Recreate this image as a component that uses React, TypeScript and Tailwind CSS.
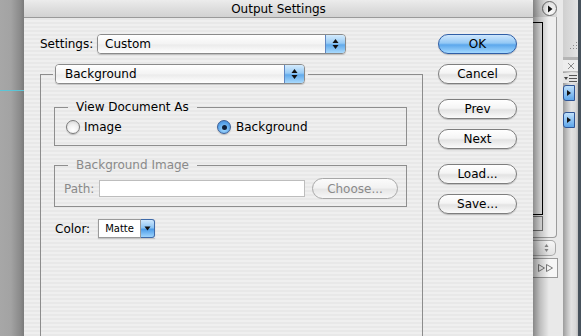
import React from "react";

function UpDown() {
  return (
    <svg width="7" height="12" viewBox="0 0 7 12">
      <path d="M3.5 1L6.5 5H0.5Z" fill="#111" />
      <path d="M3.5 11L6.5 7H0.5Z" fill="#111" />
    </svg>
  );
}

function Down() {
  return (
    <svg width="7" height="5" viewBox="0 0 7 5">
      <path d="M0.5 0.5H6.5L3.5 4.5Z" fill="#111" />
    </svg>
  );
}

function Popup({ label, width, pl }: { label: string; width: string; pl: string }) {
  return (
    <div className={`flex h-[20px] ${width} shrink-0 overflow-hidden rounded-[4px] border border-[#8a8a8a] shadow-[0_1px_1px_rgba(0,0,0,0.18)]`}>
      <div className={`flex flex-1 items-center bg-[linear-gradient(180deg,#ffffff_0%,#f3f3f3_50%,#ebebeb_55%,#ffffff_100%)] ${pl} text-[12px] text-black`}>
        {label}
      </div>
      <div className="flex w-[20px] items-center justify-center border-l border-[#5f86c0] bg-[linear-gradient(180deg,#d4ebfd_0%,#98cbf5_45%,#62aaeb_55%,#a9dafd_100%)]">
        <UpDown />
      </div>
    </div>
  );
}

function AquaButton({ children, primary }: { children: React.ReactNode; primary?: boolean }) {
  return (
    <div
      className={`flex h-[20px] w-[79px] items-center justify-center rounded-full border text-[12px] text-black shadow-[0_1px_1px_rgba(0,0,0,0.2)] ${
        primary
          ? "border-[#2f5ea6] bg-[linear-gradient(180deg,#cfe7fd_0%,#93c8f5_45%,#5ca7ec_55%,#a4d9ff_100%)]"
          : "border-[#7e7e7e] bg-[linear-gradient(180deg,#ffffff_0%,#f5f5f5_45%,#e3e3e3_55%,#fbfbfb_100%)]"
      }`}
    >
      {children}
    </div>
  );
}

function Radio({ checked }: { checked?: boolean }) {
  return checked ? (
    <div className="flex h-[14px] w-[14px] shrink-0 items-center justify-center rounded-full border border-[#3c5f96] bg-[radial-gradient(circle_at_50%_70%,#a9dcff_0%,#5aa4ea_60%,#3d7fcf_100%)] shadow-[0_1px_1px_rgba(0,0,0,0.2)]">
      <div className="h-[5px] w-[5px] rounded-full bg-[#10203a]" />
    </div>
  ) : (
    <div className="h-[14px] w-[14px] shrink-0 rounded-full border border-[#7a7a7a] bg-[radial-gradient(circle_at_50%_75%,#ffffff_0%,#f0f0f0_50%,#cfcfcf_100%)] shadow-[0_1px_1px_rgba(0,0,0,0.2)]" />
  );
}

export default function App() {
  return (
    <div className="flex h-[336px] w-[581px] overflow-hidden font-['DejaVu_Sans',sans-serif] text-[12px] text-black">
      {/* left backdrop */}
      <div className="flex w-[24px] shrink-0 flex-col bg-[linear-gradient(90deg,#a7a7a7_0%,#a3a3a3_45%,#8a8a8a_85%,#7a7a7a_100%)]">
        <div className="mt-[90px] h-px bg-[#5cc5d6]" />
      </div>

      {/* dialog */}
      <div className="flex w-[509px] shrink-0 flex-col bg-[repeating-linear-gradient(180deg,#efefef_0px,#efefef_2px,#e8e8e8_2px,#e8e8e8_4px)]">
        <div className="flex h-[18px] shrink-0 items-center justify-center rounded-tr-[5px] border-b border-[#9a9a9a] bg-[linear-gradient(180deg,#ececec_0%,#dedede_50%,#d2d2d2_100%)] text-[12px] text-black">
          Output Settings
        </div>
        <div className="flex flex-1 pl-[16px] pt-[16px]">
          {/* left column */}
          <div className="flex w-[383px] flex-col">
            <div className="flex h-[20px] items-center">
              <div className="w-[57px]">Settings:</div>
              <Popup label="Custom" width="w-[249px]" pl="pl-[7px]" />
            </div>

            {/* outer group */}
            <div className="mt-[10px] flex flex-1 flex-col">
              <div className="flex h-[20px]">
                <div className="mr-[2px] mt-[10px] w-[13px] border-l border-t border-[#8c8c8c]" />
                <Popup label="Background" width="w-[250px]" pl="pl-[9px]" />
                <div className="ml-[3px] mt-[10px] flex-1 border-r border-t border-[#8c8c8c]" />
              </div>
              <div className="flex flex-1 flex-col border-l border-r border-[#8c8c8c] pl-[13px] pt-[16px]">
                {/* View Document As */}
                <div className="flex w-[353px] flex-col">
                  <div className="flex h-[14px]">
                    <div className="mt-[7px] w-[14px] border-l border-t border-[#8e8e8e]" />
                    <div className="mx-[8px] flex items-center leading-none">View Document As</div>
                    <div className="mt-[7px] flex-1 border-r border-t border-[#8e8e8e]" />
                  </div>
                  <div className="flex h-[32px] items-start border-b border-l border-r border-[#8e8e8e] pl-[11px] pt-[6px]">
                    <div className="flex w-[151px] items-center gap-[4px]">
                      <Radio />
                      <span className="leading-none">Image</span>
                    </div>
                    <div className="flex items-center gap-[5px]">
                      <Radio checked />
                      <span className="leading-none">Background</span>
                    </div>
                  </div>
                </div>

                {/* Background Image */}
                <div className="mt-[12px] flex w-[353px] flex-col">
                  <div className="flex h-[14px]">
                    <div className="mt-[7px] w-[14px] border-l border-t border-[#8e8e8e]" />
                    <div className="mx-[8px] flex items-center leading-none text-[#8a8a8a]">Background Image</div>
                    <div className="mt-[7px] flex-1 border-r border-t border-[#8e8e8e]" />
                  </div>
                  <div className="flex h-[35px] items-start border-b border-l border-r border-[#8e8e8e] pl-[9px] pt-[6px]">
                    <div className="flex h-[21px] items-center">
                      <span className="w-[35px] text-[#8a8a8a]">Path:</span>
                      <div className="h-[17px] w-[206px] border border-[#bdbdbd] bg-white" />
                      <div className="ml-[7px] flex h-[21px] w-[86px] items-center justify-center rounded-full border border-[#a8a8a8] bg-[linear-gradient(180deg,#fbfbfb_0%,#f2f2f2_45%,#e6e6e6_55%,#f7f7f7_100%)] text-[#8a8a8a]">
                        Choose...
                      </div>
                    </div>
                  </div>
                </div>

                {/* Color */}
                <div className="mt-[12px] flex h-[19px] items-center pl-[1px]">
                  <span className="w-[43px]">Color:</span>
                  <div className="flex h-[19px] w-[57px] shadow-[0_1px_1px_rgba(0,0,0,0.15)]">
                    <div className="flex w-[43px] items-center justify-center border border-[#9a9a9a] bg-white text-[10px]">
                      Matte
                    </div>
                    <div className="flex w-[14px] items-center justify-center rounded-r-[3px] border border-l-0 border-[#3f6aa8] bg-[linear-gradient(180deg,#cfe8fd_0%,#8cc4f4_45%,#4e9de8_55%,#9ed4fd_100%)]">
                      <Down />
                    </div>
                  </div>
                </div>
              </div>
            </div>
          </div>

          {/* buttons column */}
          <div className="ml-[15px] flex flex-col">
            <AquaButton primary>OK</AquaButton>
            <div className="mt-[10px]"><AquaButton>Cancel</AquaButton></div>
            <div className="mt-[15px]"><AquaButton>Prev</AquaButton></div>
            <div className="mt-[10px]"><AquaButton>Next</AquaButton></div>
            <div className="mt-[15px]"><AquaButton>Load...</AquaButton></div>
            <div className="mt-[10px]"><AquaButton>Save...</AquaButton></div>
          </div>
        </div>
      </div>

      {/* right backdrop (windows behind) */}
      <div className="relative flex-1 bg-[#e9e9e9]">
        {/* panel A */}
        <div className="absolute left-0 top-0 h-[17px] w-[24px] bg-[linear-gradient(180deg,#e6e6e6,#d6d6d6)]" />
        <div className="absolute left-0 top-[17px] h-[221px] w-[24px] rounded-br-[4px] border-b border-r border-[#9c9c9c] bg-[#efefef]" />
        <div className="absolute left-[9px] top-[1px] flex h-[15px] w-[15px] items-center justify-center rounded-full border border-[#6a6a6a] bg-[radial-gradient(circle_at_50%_70%,#ffffff,#d8d8d8)]">
          <svg width="6" height="8" viewBox="0 0 6 8">
            <path d="M1 0.5L5.5 4L1 7.5Z" fill="#111" />
          </svg>
        </div>
        <div className="absolute left-0 top-[22px] h-[193px] w-[10px] border-b border-r border-t border-black bg-[#f2f2f2]" />
        <div className="absolute left-0 top-[216px] h-[15px] w-[10px] border border-l-0 border-[#777] bg-[#f0f0f0]" />
        <div className="absolute left-0 top-[240px] flex h-[16px] w-[23px] items-center justify-end rounded-r-[5px] border border-l-0 border-[#a8a8a8] bg-[linear-gradient(180deg,#f7f7f7,#e2e2e2)] pr-[6px]">
          <svg width="5" height="10" viewBox="0 0 5 10">
            <path d="M2.5 1L4.5 4H0.5Z" fill="#888" />
            <path d="M2.5 9L4.5 6H0.5Z" fill="#888" />
          </svg>
        </div>
        <div className="absolute left-0 top-[258px] flex h-[20px] w-[25px] items-center justify-end border border-l-0 border-[#9a9a9a] bg-[#f6f6f6] pr-[2px]">
          <svg width="18" height="8" viewBox="0 0 18 8">
            <path d="M1.5 0.5L7.5 4L1.5 7.5Z" fill="none" stroke="#7a7a7a" />
            <path d="M9.5 0.5L15.5 4L9.5 7.5Z" fill="none" stroke="#7a7a7a" />
          </svg>
        </div>
        {/* strip + panel B */}
        <div className="absolute left-[30px] top-0 h-full w-[15px] bg-[linear-gradient(90deg,#9c9c9c_0%,#c4c4c4_30%,#e2e2e2_55%,#d8d8d8_85%,#bdbdbd_100%)]" />
        <div className="absolute left-[30px] top-0 h-[57px] w-[15px] bg-[linear-gradient(90deg,#cfcfcf,#e4e4e4)]" />
        <div className="absolute left-[35px] top-[41px]">
          <svg width="10" height="10" viewBox="0 0 10 10">
            <rect x="8" y="1" width="1" height="1" fill="#8a8a8a" />
            <rect x="5" y="4" width="1" height="1" fill="#8a8a8a" />
            <rect x="8" y="4" width="1" height="1" fill="#8a8a8a" />
            <rect x="2" y="7" width="1" height="1" fill="#8a8a8a" />
            <rect x="5" y="7" width="1" height="1" fill="#8a8a8a" />
            <rect x="8" y="7" width="1" height="1" fill="#8a8a8a" />
          </svg>
        </div>
        <div className="absolute left-[30px] top-[57px] h-[3px] w-[15px] bg-[#b5b5b5]" />
        <div className="absolute left-[30px] top-[60px] flex h-[12px] w-[15px] items-center justify-center border-b border-[#bdbdbd] bg-[#ededed]">
          <svg width="8" height="8" viewBox="0 0 8 8">
            <path d="M1 1L7 7M7 1L1 7" stroke="#8a8a8a" strokeWidth="1" />
          </svg>
        </div>
        <div className="absolute left-[30px] top-[73px] flex h-[10px] w-[15px] items-center gap-[1px] bg-[#e4e4e4] pl-[1px]">
          <svg width="4" height="3" viewBox="0 0 4 3"><path d="M0 0H4L2 3Z" fill="#444" /></svg>
          <svg width="8" height="7" viewBox="0 0 8 7">
            <rect x="0" y="0" width="8" height="1" fill="#555" />
            <rect x="0" y="3" width="8" height="1" fill="#555" />
            <rect x="0" y="6" width="8" height="1" fill="#555" />
          </svg>
        </div>
        <div className="absolute left-[30px] top-[85px] flex h-[16px] w-[12px] items-center justify-center rounded-l-[3px] border border-[#2f5596] bg-[linear-gradient(180deg,#bfe0fb,#5ea6ea)]">
          <svg width="4" height="6" viewBox="0 0 4 6"><path d="M0 0L4 3L0 6Z" fill="#111" /></svg>
        </div>
        <div className="absolute left-[30px] top-[112px] flex h-[16px] w-[12px] items-center justify-center rounded-l-[3px] border border-[#2f5596] bg-[linear-gradient(180deg,#bfe0fb,#5ea6ea)]">
          <svg width="4" height="6" viewBox="0 0 4 6"><path d="M0 0L4 3L0 6Z" fill="#111" /></svg>
        </div>
        <div className="absolute left-[45px] top-0 h-full w-[3px] bg-[#46515b]" />
        {/* dialog shadow */}
        <div className="absolute left-0 top-0 h-full w-[16px] bg-[linear-gradient(90deg,rgba(0,0,0,0.42)_0%,rgba(0,0,0,0.18)_45%,rgba(0,0,0,0)_100%)]" />
      </div>
    </div>
  );
}
